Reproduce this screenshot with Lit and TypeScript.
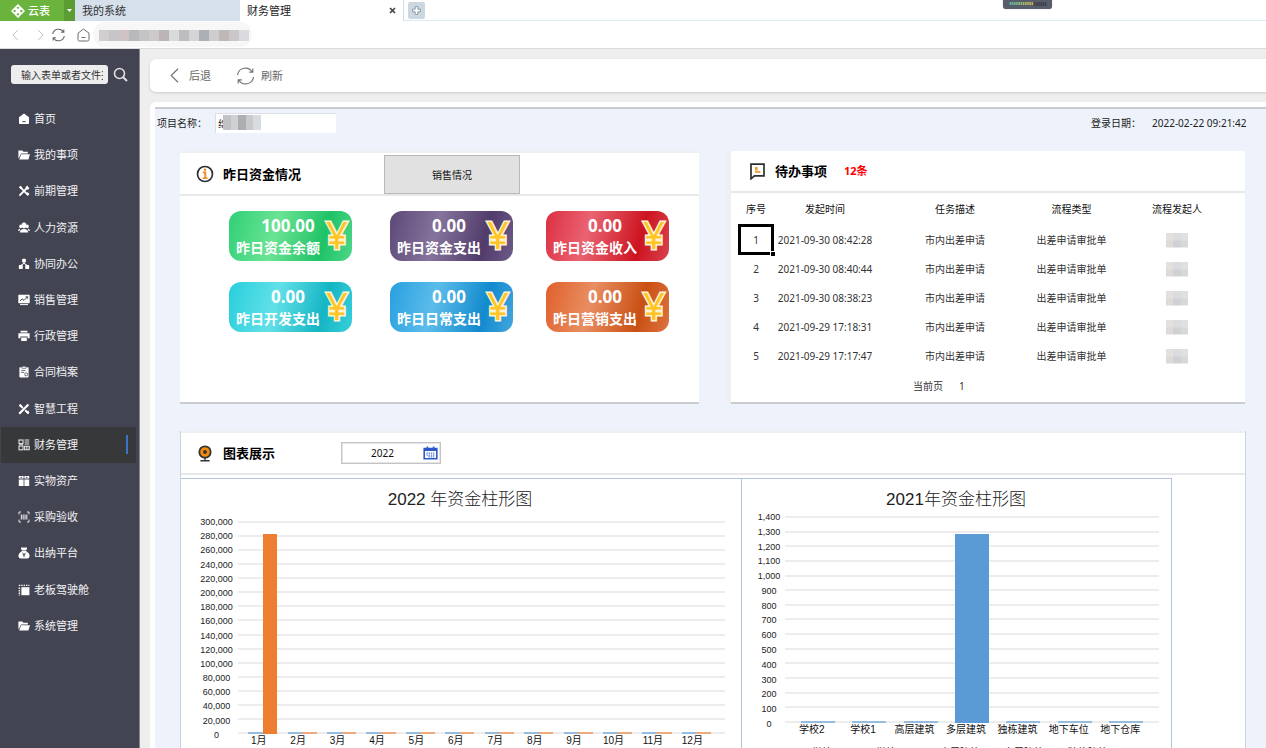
import { LitElement, html, css, svg, TemplateResult } from "lit";
import { customElement, property, state } from "lit/decorators.js";
import { classMap } from "lit/directives/class-map.js";
import { styleMap } from "lit/directives/style-map.js";

/* ---------- menu icons, drawn on a 12 x 12 grid ---------- */

const menuIcons: Record<string, TemplateResult> = {
  home: svg`<path fill="#fff" d="M6 .6 11 4.2V10.2Q11 11 10.2 11H1.8Q1 11 1 10.2V4.2Z"/><path stroke="#424452" d="M4.4 8.6h3.2"/>`,
  folder: svg`<path fill="#fff" d="M.4 1.6h4l1 1.2h4.4v1.6H3L1.4 8 .4 9.4ZM3.2 5.2H12L10.4 10.4H1.2Z"/>`,
  tools: svg`<path stroke="#fff" stroke-width="1.8" d="M1.4 10.6 10 2M2.4 2.4l7.8 7.8"/><path fill="#fff" d="M.8 2.2 2.6.8 4.4 2.6 3 4.2ZM8.2 1.2 10 .6 9.4 2.4 11.4 2.6 10.6 4.4 8.6 4.6 7.4 3.2ZM8 9l1.8-1.8L11.4 9 9.8 10.8Z"/>`,
  people: svg`<g fill="#fff"><ellipse cx="6" cy="3.4" rx="2.4" ry="2.8"/><ellipse cx="2.7" cy="4.4" rx="1.5" ry="1.8"/><ellipse cx="9.3" cy="4.4" rx="1.500" ry="1.8"/><path d="M1.8 10.6Q1.8 7 6 7T10.2 10.600ZM0 9Q.2 6.800 2.400 6.600L1.400 9ZM12 9Q11.800 6.800 9.600 6.600L10.600 9Z"/></g>`,
  nodes: svg`<g fill="#fff"><rect x="4.1" y=".8" width="3.8" height="3.6" rx=".8"/><rect x=".8" y="7" width="4" height="4" rx=".8"/><rect x="7.2" y="7" width="4" height="4" rx=".8"/></g><path stroke="#fff" fill="none" d="M6 4v1.6M3 7.2 6 5.4 9 7.2"/>`,
  trend: svg`<rect x=".3" y=".8" width="11.4" height="8.4" rx=".6" fill="#fff"/><path stroke="#fff" d="M2 10.6h8"/><path stroke="#424452" fill="none" d="M2 6.8 4.2 5 6 6.4 9.6 2.8M7.6 2.8h2v1.8"/>`,
  printer: svg`<path fill="#fff" d="M2.6.8h6.8v1.6H2.6ZM.4 3.2h11.2v5H9.6V6.6H2.4v1.6h-2ZM3.2 7.4h5.6V11H3.2Z"/>`,
  clipboard: svg`<rect x="1.4" y="1.2" width="9.2" height="10.2" rx=".8" fill="#fff"/><rect x="4" y=".2" width="4" height="2" fill="#fff" stroke="#424452" stroke-width=".6"/><path stroke="#424452" stroke-width=".8" d="M3.2 4.4h4.2M3.2 6.4h3"/><circle cx="8.2" cy="8.4" r="1.5" fill="none" stroke="#424452" stroke-width=".8"/>`,
  cross: svg`<path stroke="#fff" stroke-width="2.2" d="M1.2 10.8 10.4 1.4"/><path stroke="#fff" stroke-width="2" d="M1.6 1.8 4.8 5M7.2 7.2l3.4 3.4"/><path fill="#fff" d="M8.2 9.2 10 7.6l1.4 1.6-1.6 1.8ZM.8 2.6 2.4 1l1.4 1.4L2.4 4Z"/>`,
  blocks: svg`<g fill="none" stroke="#e4e4e6" stroke-width="1.1"><rect x="1" y="1" width="4" height="3.6"/><rect x="1" y="7" width="4" height="3.8"/><path d="M6.6 1h4.6M6.6 3h4.6M6.6 5h4.6M6.6 7.2h4.6v3.6H6.6ZM8.9 7.2v3.6M1 5.8h4"/></g>`,
  assets: svg`<g fill="#fff"><path d="M.8 1h4.8v2.6H.8ZM6.4 1h4.8v2.6H6.4ZM.8 4.4h4.8V11H.8ZM6.4 4.4h4.8V11H6.4Z"/></g><path stroke="#424452" stroke-width=".8" d="M2.4 2.3h1.6M8 2.3h1.6"/>`,
  scan: svg`<path fill="none" stroke="#e4e4e6" d="M3 1H1v2.4M9 1h2v2.4M3 11H1V8.6M9 11h2V8.6"/><path stroke="#d8d8dc" stroke-width="1.2" d="M3.4 3.4v5.2M5.2 3.4v5.2M7 3.4v5.2M8.8 3.4v5.2"/>`,
  purse: svg`<path fill="#fff" d="M3 .4h6v1.4L8 3.4H4L3 1.8ZM4 4h4q3.8 2.4 3.6 5.2Q11.4 11.4 9 11.4H3Q.6 11.4.4 9.2.2 6.4 4 4Z"/><path fill="none" stroke="#424452" stroke-width=".9" d="M4.4 5.8 6 7.4 7.6 5.8M6 7.4v2.8M4.6 7.8h2.8"/>`,
  panel: svg`<rect x="3.4" y="3.2" width="8" height="8" fill="#fff"/><path fill="none" stroke="#fff" stroke-width="1.4" stroke-dasharray="1.5 .9" d="M.8 1.4H11.4M1.4 3.6V11.4"/>`,
};

interface MenuItem { label: string; icon: string; }

const menu: MenuItem[] = [
  { label: "首页", icon: "home" },
  { label: "我的事项", icon: "folder" },
  { label: "前期管理", icon: "tools" },
  { label: "人力资源", icon: "people" },
  { label: "协同办公", icon: "nodes" },
  { label: "销售管理", icon: "trend" },
  { label: "行政管理", icon: "printer" },
  { label: "合同档案", icon: "clipboard" },
  { label: "智慧工程", icon: "cross" },
  { label: "财务管理", icon: "blocks" },
  { label: "实物资产", icon: "assets" },
  { label: "采购验收", icon: "scan" },
  { label: "出纳平台", icon: "purse" },
  { label: "老板驾驶舱", icon: "panel" },
  { label: "系统管理", icon: "folder" },
];

const funds = [
  { label: "昨日资金余额", amount: "100.00", tone: "green" },
  { label: "昨日资金支出", amount: "0.00", tone: "purple" },
  { label: "昨日资金收入", amount: "0.00", tone: "red" },
  { label: "昨日开发支出", amount: "0.00", tone: "cyan" },
  { label: "昨日日常支出", amount: "0.00", tone: "blue" },
  { label: "昨日营销支出", amount: "0.00", tone: "orange" },
];

const todos = [
  "2021-09-30 08:42:28",
  "2021-09-30 08:40:44",
  "2021-09-30 08:38:23",
  "2021-09-29 17:18:31",
  "2021-09-29 17:17:47",
];

/* ---------- bar chart ---------- */

interface Category { label: string; values: number[]; }

@customElement("bar-chart")
export class BarChart extends LitElement {
  @property() heading = "";
  @property({ type: Number }) max = 100;
  @property({ type: Number }) step = 10;
  @property({ attribute: false }) categories: Category[] = [];
  @property({ attribute: false }) colors: string[] = [];
  @property({ attribute: false }) legend: string[] = [];
  @property({ type: Boolean, reflect: true }) compact = false;

  static styles = css`
    :host {
      display: block;
      box-sizing: border-box;
      padding: 10px 16px 0 14px;
      border-right: 1px solid #b0c4dc;
      border-top: 1px solid #b0c4dc;
      color: #222;
      font-family: "Liberation Sans", "Noto Sans CJK SC", sans-serif;
      --axis: 43px;
      --plot: 213px;
      --lead: 10px;
    }
    :host([compact]) {
      padding: 10px 12px 0 11px;
      --axis: 32px;
      --plot: 207px;
      --lead: 5px;
    }
    .title {
      margin: 0;
      font-size: 17px;
      line-height: 22px;
      font-weight: 300;
      text-align: center;
    }
    .body {
      display: grid;
      grid-template-columns: var(--axis) minmax(0, 1fr);
      padding-top: var(--lead);
    }
    .axis {
      display: flex;
      flex-direction: column;
      justify-content: space-between;
      margin-block: -6px -8px;
      font-size: 9px;
      line-height: 14px;
      text-align: center;
    }
    .plot { display: grid; height: var(--plot); }
    .lines, .bars { grid-area: 1 / 1; }
    .lines {
      display: flex;
      flex-direction: column;
      justify-content: space-between;
    }
    .line { height: 2px; background: #ededed; }
    .bars { display: flex; padding: 0 9px 0 5px; z-index: 1; }
    :host([compact]) .bars { padding: 0 7px; }
    .cluster {
      flex: 1;
      display: flex;
      align-items: flex-end;
      justify-content: center;
    }
    .bar { width: 37%; min-height: 2px; }
    :host([compact]) .bar { width: 66%; }
    .zero { opacity: 0.6; }
    .labels {
      grid-column: 2;
      display: flex;
      padding: 0 13px 0 1px;
      font-size: 10px;
      line-height: 14px;
      text-align: center;
      color: #111;
    }
    .label { flex: 1; white-space: nowrap; }
    .legend {
      grid-column: 2;
      display: flex;
      gap: 24px;
      padding: 9px 0 0 27px;
      font-size: 10px;
      line-height: 14px;
    }
    .key { width: 40px; flex: none; }
  `;

  render() {
    const ticks: number[] = [];
    for (let v = this.max; v >= 0; v -= this.step) ticks.push(v);
    return html`
      <h3 class="title">${this.heading}</h3>
      <div class="body">
        <div class="axis">${ticks.map((t) => html`<span>${t.toLocaleString("en-US")}</span>`)}</div>
        <div class="plot">
          <div class="lines">${ticks.map(() => html`<div class="line"></div>`)}</div>
          <div class="bars">
            ${this.categories.map((c) => html`<div class="cluster">
              ${c.values.map((v, i) => html`<div
                class=${classMap({ bar: true, zero: v === 0 })}
                style=${styleMap({ height: `${(v / this.max) * 100}%`, background: this.colors[i] })}
              ></div>`)}
            </div>`)}
          </div>
        </div>
        <div class="labels">${this.categories.map((c) => html`<span class="label">${c.label}</span>`)}</div>
        ${this.legend.length
          ? html`<div class="legend">${this.legend.map((l) => html`<span class="key">${l}</span>`)}</div>`
          : null}
      </div>
    `;
  }
}

/* ---------- page ---------- */

@customElement("app-root")
export class AppRoot extends LitElement {
  @state() private current = "财务管理";

  private months: Category[] = Array.from({ length: 12 }, (_, i) => ({
    label: `${i + 1}月`,
    values: [0, i === 0 ? 282000 : 0],
  }));

  private buildings: Category[] = [
    { label: "学校2", values: [0] },
    { label: "学校1", values: [0] },
    { label: "高层建筑", values: [0] },
    { label: "多层建筑", values: [1275] },
    { label: "独栋建筑", values: [0] },
    { label: "地下车位", values: [0] },
    { label: "地下仓库", values: [0] },
  ];

  static styles = css`
    :host {
      display: flex;
      flex-direction: column;
      height: 100vh;
      overflow: hidden;
      background: #eee;
      color: #222;
      font-family: "Noto Sans", "Noto Sans CJK SC", sans-serif;
      font-size: 10px;
      line-height: 16px;
    }
    * { box-sizing: border-box; }
    button, input {
      font: inherit;
      color: inherit;
      margin: 0;
      padding: 0;
      border: 0;
      background: none;
      border-radius: 0;
    }
    svg { display: block; flex: none; fill: none; }
    a { color: inherit; text-decoration: none; }

    /* tab strip */
    .tabs {
      position: relative;
      display: flex;
      flex: none;
      height: 21px;
      background: #fff;
      border-bottom: 1px solid #dfe9f0;
      font-size: 11px;
      line-height: 20px;
    }
    .brand {
      display: flex;
      align-items: center;
      gap: 3px;
      width: 64px;
      height: 21px;
      padding-left: 11px;
      background: #6ab43e;
      color: #fff;
      font-weight: 500;
    }
    .brand-more {
      display: flex;
      align-items: center;
      justify-content: center;
      width: 11px;
      height: 21px;
      background: #5b9d33;
    }
    .tab {
      display: flex;
      align-items: center;
      width: 165px;
      height: 21px;
      padding-left: 7px;
      background: #d5e0eb;
      color: #333;
    }
    .tab-on { width: 164px; padding-right: 7px; background: #fff; color: #222; border-right: 1px solid #cfdde8; }
    .tab-on .tab-name { flex: 1; }
    .add {
      display: flex;
      align-items: center;
      justify-content: center;
      width: 17px;
      height: 17px;
      margin: 2px 0 0 4px;
      border-radius: 2px;
      background: #cbd8e2;
    }
    .meter {
      position: absolute;
      right: 214px;
      top: 0;
      width: 49px;
      height: 9px;
      padding: 1px 6px;
      border-radius: 0 0 3px 3px;
      background: #585d6c;
      box-shadow: 0 0 1px #888;
    }

    /* address row */
    .address {
      display: flex;
      flex: none;
      align-items: center;
      height: 28px;
      padding-left: 10px;
      background: #fff;
      border-bottom: 1px solid #dadada;
    }
    .address button + button { margin-left: 10px; }
    .address .reload { margin-left: 7px; }
    .address button { flex: none; }
    .url {
      display: flex;
      margin-left: 2px;
      padding: 8px 3px 6px 6px;
      border-radius: 12px;
      background: #f7f7f8;
    }
    .url i { width: 10px; height: 11px; }

    .layout { display: flex; flex: 1; min-height: 0; }

    /* sidebar */
    .side {
      flex: none;
      width: 140px;
      background: #424452;
      border-right: 1px solid #858791;
      color: #f2f2f4;
    }
    .search { display: flex; align-items: center; gap: 5px; padding: 16px 0 0 11px; }
    .search input {
      width: 97px;
      height: 19px;
      padding: 0 5px 0 10px;
      border-radius: 3px;
      background: #ededee;
      color: #333;
    }
    .search input::placeholder { color: #333; opacity: 1; }
    .menu {
      display: grid;
      grid-auto-rows: 1fr;
      height: 543px;
      margin: 17px 3px 0 1px;
      padding: 0;
      list-style: none;
      font-size: 11px;
    }
    .menu a {
      display: flex;
      align-items: center;
      gap: 4px;
      height: 100%;
      padding: 0 8px 0 17px;
    }
    .menu .on { background: #37383a; }
    .on::after {
      content: "";
      width: 2px;
      height: 19px;
      margin-left: auto;
      background: #3a74c4;
    }

    /* main column */
    .main { flex: 1; min-width: 0; padding: 10px 0 0 10px; }
    .toolbar {
      display: flex;
      align-items: center;
      height: 33px;
      margin-bottom: 10px;
      padding-left: 20px;
      gap: 25px;
      border-radius: 6px 0 0 6px;
      background: #fff;
      box-shadow: 0 1px 3px rgba(0, 0, 0, 0.14);
      color: #666;
      font-size: 11px;
    }
    .tool { display: flex; align-items: center; gap: 10px; }
    .tool-tight { gap: 6px; }
    .page { padding: 5px 0 0 5px; border-radius: 6px 0 0 0; background: #fff; }
    .sheet { padding: 4px 20px 0 25px; border-top: 2px solid #c9cbd1; background: #eef2fa; }

    .project { display: flex; align-items: center; height: 20px; margin: 0 -4px 18px -23px; }
    .project label { width: 58px; }
    .name-box { position: relative; width: 121px; }
    .name-box input {
      width: 100%;
      height: 20px;
      padding-left: 2px;
      border-left: 1px solid #dcdfe6;
      border-top: 1px solid #dcdfe6;
      background: #fff;
    }
    .mask {
      position: absolute;
      left: 8px;
      top: 2px;
      width: 38px;
      height: 15px;
      background: linear-gradient(90deg, #bfc3c6 0 20%, #d0d1d2 20% 40%, #adaeb1 40% 60%, #c9cacb 60% 80%, #d8dbe0 80%);
    }
    .login { display: flex; margin-left: auto; gap: 11px; }
    .login time { width: 98px; white-space: nowrap; }

    .row {
      display: grid;
      grid-template-columns: minmax(0, 519fr) minmax(0, 514fr);
      column-gap: 32px;
      margin-right: 1px;
    }
    .panel { background: #fff; border-bottom: 2px solid #cbccd1; }
    .panel-strip { border-top: 2px solid #efeff1; }
    .panel-edge { box-shadow: -4px 0 0 #efeff2; }
    .head {
      display: flex;
      align-items: center;
      height: 42px;
      border-bottom: 2px solid #e8e8ea;
      color: #111;
    }
    .head h2 { margin: 0; font-size: 13px; line-height: 20px; font-weight: 700; color: #000; }
    .head-funds { height: 43px; padding-left: 16px; gap: 9px; }
    .head-funds h2 { width: 152px; }
    .sales {
      width: 136px;
      height: 39px;
      border: 1px solid #b8b8b8;
      background: #e1e1e1;
      color: #111;
      align-self: flex-end;
    }
    .head-todo { padding-left: 19px; gap: 10px; }
    .count { margin-left: 7px; font-size: 11px; font-weight: 700; color: #f00; }

    .cards {
      display: grid;
      grid-template-columns: 161fr 156fr 153fr;
      row-gap: 21px;
      padding: 15px 0 0 49px;
    }
    .card {
      display: grid;
      grid-template-columns: 90px 1fr;
      align-items: center;
      width: 123px;
      height: 50px;
      padding: 4px 5px 2px 7px;
      border-radius: 12px;
      color: #fff;
    }
    .facts { display: flex; flex-direction: column; white-space: nowrap; }
    .amount { width: 104px; font-size: 17px; line-height: 22px; font-weight: 700; text-align: center; }
    .kind { font-size: 14px; line-height: 22px; font-weight: 700; }
    .yen {
      margin-top: -6px;
      font-size: 38px;
      line-height: 38px;
      font-weight: 400;
      text-align: center;
      color: #ffc524;
      -webkit-text-stroke: 3px #fff3d6;
      paint-order: stroke fill;
    }
    .green { background: linear-gradient(105deg, #2fd076, #6be394 38%, #1fc266 75%, #4ed88a); }
    .purple { background: linear-gradient(105deg, #5c4878, #85749b 38%, #513b6b 75%, #6d5b88); }
    .red { background: linear-gradient(105deg, #dc2f42, #ea6371 34%, #cc1420 75%, #d8434f); }
    .cyan { background: linear-gradient(105deg, #27cfdc, #62e0e8 38%, #15b5c4 75%, #38cfdc); }
    .blue { background: linear-gradient(105deg, #27a0e0, #5cbcea 36%, #128ace 75%, #43a6de); }
    .orange { background: linear-gradient(105deg, #e0602a, #e88e62 36%, #ca5014 75%, #dc7440); }

    .todo {
      width: calc(100% - 7px);
      margin-left: 7px;
      border-collapse: collapse;
      table-layout: fixed;
      text-align: center;
      color: #333;
    }
    .todo th { height: 32px; padding: 0; font-weight: 400; color: #111; }
    .todo td { height: 29px; padding: 0; white-space: nowrap; }
    .c1 { width: 36px; }
    .c2 { width: 102px; }
    .c3 { width: 158px; }
    .c4 { width: 75px; }
    .pick { position: relative; }
    .pick::before {
      content: "";
      position: absolute;
      inset: -1px 0;
      border: 2px solid #000;
      outline: 1px solid #000;
      outline-offset: -3px;
    }
    .pick::after {
      content: "";
      position: absolute;
      right: -1px;
      bottom: -2px;
      width: 4px;
      height: 4px;
      background: #000;
      box-shadow: -1px -1px 0 #fff;
    }
    .blot {
      display: inline-block;
      width: 22px;
      height: 15px;
      vertical-align: middle;
      background:
        linear-gradient(90deg, #e4e0dd 0 33%, #dadcde 33% 66%, #dfe1e1 66%) top / 100% 50% no-repeat,
        linear-gradient(90deg, #dddad9 0 33%, #cfd2d5 33% 66%, #d7d9d9 66%) bottom / 100% 50% no-repeat;
    }
    .pager { display: flex; gap: 16px; height: 32px; align-items: center; padding-left: 182px; color: #333; }

    .charts {
      margin-top: 27px;
      padding-top: 2px;
      border: solid #cdd3dd;
      border-width: 0 1px;
      background: linear-gradient(#efeff1 2px, #fff 2px);
    }
    .head-charts { padding-left: 17px; gap: 11px; }
    .head-charts h2 { width: 107px; }
    .year {
      display: flex;
      align-items: center;
      width: 100px;
      height: 22px;
      padding-right: 2px;
      border: 1px solid #c4c4c4;
      outline: 1px solid #e6e6e6;
      outline-offset: -2px;
    }
    .year input { flex: 1; min-width: 0; text-align: center; color: #111; }
    .plots {
      display: grid;
      grid-template-columns: 561fr 430fr 73fr;
      height: 300px;
      margin-top: 3px;
    }
  `;

  private icon(name: string) {
    return html`<svg width="12" height="12" viewBox="0 0 12 12" aria-hidden="true">${menuIcons[name]}</svg>`;
  }

  private renderTop() {
    const blocks = ["#d2cdce", "#c6c5ca", "#cfc3c6", "#b9b8bd", "#c5c4c4", "#cccaca", "#bdb4b8", "#d9dbdb", "#bfbcc1", "#d5d4d6", "#abb0b5", "#cecdce", "#bfb8b6", "#c9c7c9", "#dadae0"];
    return html`
      <header class="tabs">
        <button class="brand">
          <svg width="14" height="14" viewBox="0 0 13 13"><g stroke="#fff" stroke-width="1.5"><path d="M6.5 1 8.9 3.4 6.5 5.8 4.1 3.4ZM3.4 4.1 5.8 6.5 3.4 8.9 1 6.5ZM9.6 4.1 12 6.5 9.6 8.9 7.2 6.5ZM6.5 7.2 8.9 9.6 6.5 12 4.1 9.6Z"/></g></svg>
          <span>云表</span>
        </button>
        <button class="brand-more" aria-label="更多">
          <svg width="5" height="3" viewBox="0 0 5 3"><path fill="#fff" d="M0 0h5L2.5 3Z"/></svg>
        </button>
        <a class="tab" href="#system">我的系统</a>
        <div class="tab tab-on">
          <span class="tab-name">财务管理</span>
          <button aria-label="关闭"><svg width="7" height="7" viewBox="0 0 7 7"><path stroke="#444" stroke-width="1.7" d="M1 1l5 5M6 1 1 6"/></svg></button>
        </div>
        <button class="add" aria-label="新建">
          <svg width="9" height="9" viewBox="0 0 9 9"><path fill="#fff" stroke="#7d878f" stroke-width=".8" d="M3.2.6h2.6v2.6h2.6v2.6H5.8v2.6H3.2V5.8H.6V3.2h2.6Z"/></svg>
        </button>
        <div class="meter">
          <svg width="38" height="5" viewBox="0 0 38 5">
            <defs><linearGradient id="led"><stop stop-color="#55b8ac"/><stop offset=".6" stop-color="#9fb868"/><stop offset="1" stop-color="#d2b04a"/></linearGradient></defs>
            <rect y="1" width="24" height="3" fill="url(#led)"/><rect x="25" y="1" width="13" height="4" fill="#40434e"/>
            <path stroke="#585d6c" stroke-width="4" stroke-dasharray=".6 1.6" d="M0 2.5H38"/>
          </svg>
        </div>
      </header>
      <nav class="address">
        <button aria-label="上一页"><svg width="10" height="12" viewBox="0 0 10 12"><path stroke="#c4c4c4" d="M8 1 3 6l5 5"/></svg></button>
        <button aria-label="下一页"><svg width="14" height="12" viewBox="0 0 14 12"><path stroke="#c4c4c4" d="M8 1l5 5-5 5"/></svg></button>
        <button class="reload" aria-label="刷新"><svg width="15" height="14" viewBox="0 0 14 14"><path stroke="#666" stroke-width="1.1" d="M1.2 6A5.9 5.9 0 0 1 12 4M12.8 8A5.9 5.9 0 0 1 2 10M12.3 1.4V4.2H9.6M1.7 12.6V9.8H4.4"/></svg></button>
        <button aria-label="主页"><svg width="15" height="14" viewBox="0 0 15 14"><path stroke="#6b6b72" d="M2 5.2 7.5 1 13 5.2V11.5Q13 13 11.5 13H3.5Q2 13 2 11.5ZM5.5 9.5h4"/></svg></button>
        <div class="url">${blocks.map((c) => html`<i style=${styleMap({ background: c })}></i>`)}</div>
      </nav>
    `;
  }

  private renderSide() {
    return html`
      <aside class="side">
        <form class="search">
          <input type="text" aria-label="搜索" placeholder="输入表单或者文件夹名称" />
          <button type="button" aria-label="搜索"><svg width="15" height="15" viewBox="0 0 15 15"><circle cx="6.5" cy="6.5" r="5" stroke="#dfdfe2" stroke-width="1.6"/><path stroke="#dfdfe2" stroke-width="2" d="M10.2 10.2 14 14"/></svg></button>
        </form>
        <ul class="menu">
          ${menu.map((m) => html`<li>
            <a href="#" class=${classMap({ on: m.label === this.current })}
              @click=${(e: Event) => { e.preventDefault(); this.current = m.label; }}
            >${this.icon(m.icon)}<span>${m.label}</span></a>
          </li>`)}
        </ul>
      </aside>
    `;
  }

  private renderFunds() {
    return html`
      <section class="panel panel-strip">
        <div class="head head-funds">
          <svg width="18" height="18" viewBox="0 0 18 18"><circle cx="9" cy="9" r="7.5" stroke="#2f2f33" stroke-width="1.7"/><path stroke="#f08a1c" stroke-width="1.9" d="M6.8 7.4h2.5v5.6"/><path stroke="#f08a1c" stroke-width="1.5" d="M6.6 13.2h5"/><circle cx="9" cy="4.8" r="1.2" fill="#f08a1c"/></svg>
          <h2>昨日资金情况</h2>
          <button class="sales">销售情况</button>
        </div>
        <div class="cards">
          ${funds.map((f) => html`<div class="card ${f.tone}">
            <div class="facts"><span class="amount">${f.amount}</span><span class="kind">${f.label}</span></div>
            <span class="yen">¥</span>
          </div>`)}
        </div>
      </section>
    `;
  }

  private renderTodo() {
    return html`
      <section class="panel panel-edge">
        <div class="head head-todo">
          <svg width="15" height="17" viewBox="0 0 15 17"><path stroke="#2f2f33" stroke-width="1.7" d="M1 1.2H14V12.8H4.4L1 15.8Z"/><path stroke="#f59a2c" stroke-width="1.7" d="M5 4.8h2.6M5 6.6h2.6M5 8.8h5.4"/></svg>
          <h2>待办事项</h2>
          <span class="count">12条</span>
        </div>
        <table class="todo">
          <colgroup><col class="c1" /><col class="c2" /><col class="c3" /><col class="c4" /><col /></colgroup>
          <thead><tr><th>序号</th><th>发起时间</th><th>任务描述</th><th>流程类型</th><th>流程发起人</th></tr></thead>
          <tbody>
            ${todos.map((t, i) => html`<tr>
              <td class=${classMap({ pick: i === 0 })}>${i + 1}</td>
              <td>${t}</td><td>市内出差申请</td><td>出差申请审批单</td><td><span class="blot"></span></td>
            </tr>`)}
          </tbody>
        </table>
        <div class="pager"><span>当前页</span><span>1</span></div>
      </section>
    `;
  }

  private renderCharts() {
    return html`
      <section class="charts">
        <div class="head head-charts">
          <svg width="14" height="17" viewBox="0 0 14 17"><circle cx="7" cy="7" r="5.7" fill="#f38b0c" stroke="#33343a" stroke-width="1.8"/><circle cx="7" cy="7" r="1.9" fill="#33343a"/><path stroke="#33343a" stroke-width="1.4" d="M7 12.5V15.5M2.4 15.8h9.2"/></svg>
          <h2>图表展示</h2>
          <div class="year">
            <input type="text" aria-label="年份" .value=${"2022"} />
            <button aria-label="选择年份"><svg width="15" height="14" viewBox="0 0 15 14"><path stroke="#2f57cc" stroke-width="1.6" d="M1.2 2.6H13.8V12.8H1.2ZM4.4.6V3.4M10.6.6V3.4M1.2 4.2H13.8"/><path stroke="#5a7cdc" stroke-width="1.3" stroke-dasharray="1.4 .8" d="M3.4 7.2h8.4M3.4 9.2h8.4M5.4 10.9h6"/></svg></button>
          </div>
        </div>
        <div class="plots">
          <bar-chart heading="2022 年资金柱形图" .max=${300000} .step=${20000}
            .categories=${this.months} .colors=${["#5b9bd5", "#ed7d31"]}></bar-chart>
          <bar-chart compact heading="2021年资金柱形图" .max=${1400} .step=${100}
            .categories=${this.buildings} .colors=${["#5b9bd5"]}
            .legend=${["学校2", "学校1", "高层建筑", "多层建筑", "独栋建筑"]}></bar-chart>
        </div>
      </section>
    `;
  }

  render() {
    return html`
      ${this.renderTop()}
      <div class="layout">
        ${this.renderSide()}
        <main class="main">
          <div class="toolbar">
            <button class="tool"><svg width="9" height="15" viewBox="0 0 9 15"><path stroke="#777" stroke-width="1.2" d="M8 .8 1.2 7.5 8 14.2"/></svg>后退</button>
            <button class="tool tool-tight"><svg width="19" height="18" viewBox="0 0 19 18"><path stroke="#777" stroke-width="1.2" d="M1.5 8A8 8 0 0 1 16.3 5M17.5 10A8 8 0 0 1 2.7 13M16.8 1.5V5.2H13.2M2.2 16.5V12.8H5.8"/></svg>刷新</button>
          </div>
          <div class="page">
            <div class="sheet">
              <div class="project">
                <label for="project">项目名称：</label>
                <div class="name-box"><input id="project" type="text" .value=${"绵"} /><span class="mask"></span></div>
                <div class="login"><span>登录日期：</span><time>2022-02-22 09:21:42</time></div>
              </div>
              <div class="row">${this.renderFunds()}${this.renderTodo()}</div>
              ${this.renderCharts()}
            </div>
          </div>
        </main>
      </div>
    `;
  }
}
